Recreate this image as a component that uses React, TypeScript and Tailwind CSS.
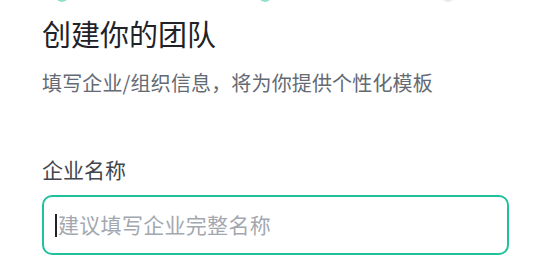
export default function App() {
  return (
    <div
      className="w-[550px] h-[275px] bg-white overflow-hidden"
      style={{ fontFamily: '"Noto Sans CJK SC", "Noto Sans", sans-serif' }}
    >
      {/* step dots, mostly scrolled off the top */}
      <div className="flex h-[2px] overflow-hidden pl-[56px]">
        <div className="-mt-[10px] w-[12px] h-[12px] shrink-0 rounded-full bg-[#8fe0cc]" />
        <div className="-mt-[10px] ml-[191px] w-[12px] h-[12px] shrink-0 rounded-full bg-[#8fe0cc]" />
        <div className="-mt-[10px] ml-[171px] w-[12px] h-[12px] shrink-0 rounded-full bg-[#e6e8eb]" />
      </div>

      <div className="px-[42px]">
        <h1 className="mt-[11px] text-[29px] leading-[40px] text-[#1f2329]">创建你的团队</h1>
        <p className="mt-[16px] text-[20px] leading-[28px] tracking-[0.15px] text-[#646a73]">
          填写企业/组织信息，将为你提供个性化模板
        </p>

        <div className="mt-[58px] text-[21px] leading-[28px] text-[#41464f]">企业名称</div>

        <div className="mt-[12px] w-[467px] h-[60px] rounded-[10px] border-2 border-[#1fc29d] flex items-center pl-[11px]">
          <span className="w-[2px] h-[23px] bg-[#1f2329]" />
          <span className="ml-[1px] text-[21px] tracking-[0.3px] text-[#a3a8b0]">建议填写企业完整名称</span>
        </div>
      </div>
    </div>
  );
}
